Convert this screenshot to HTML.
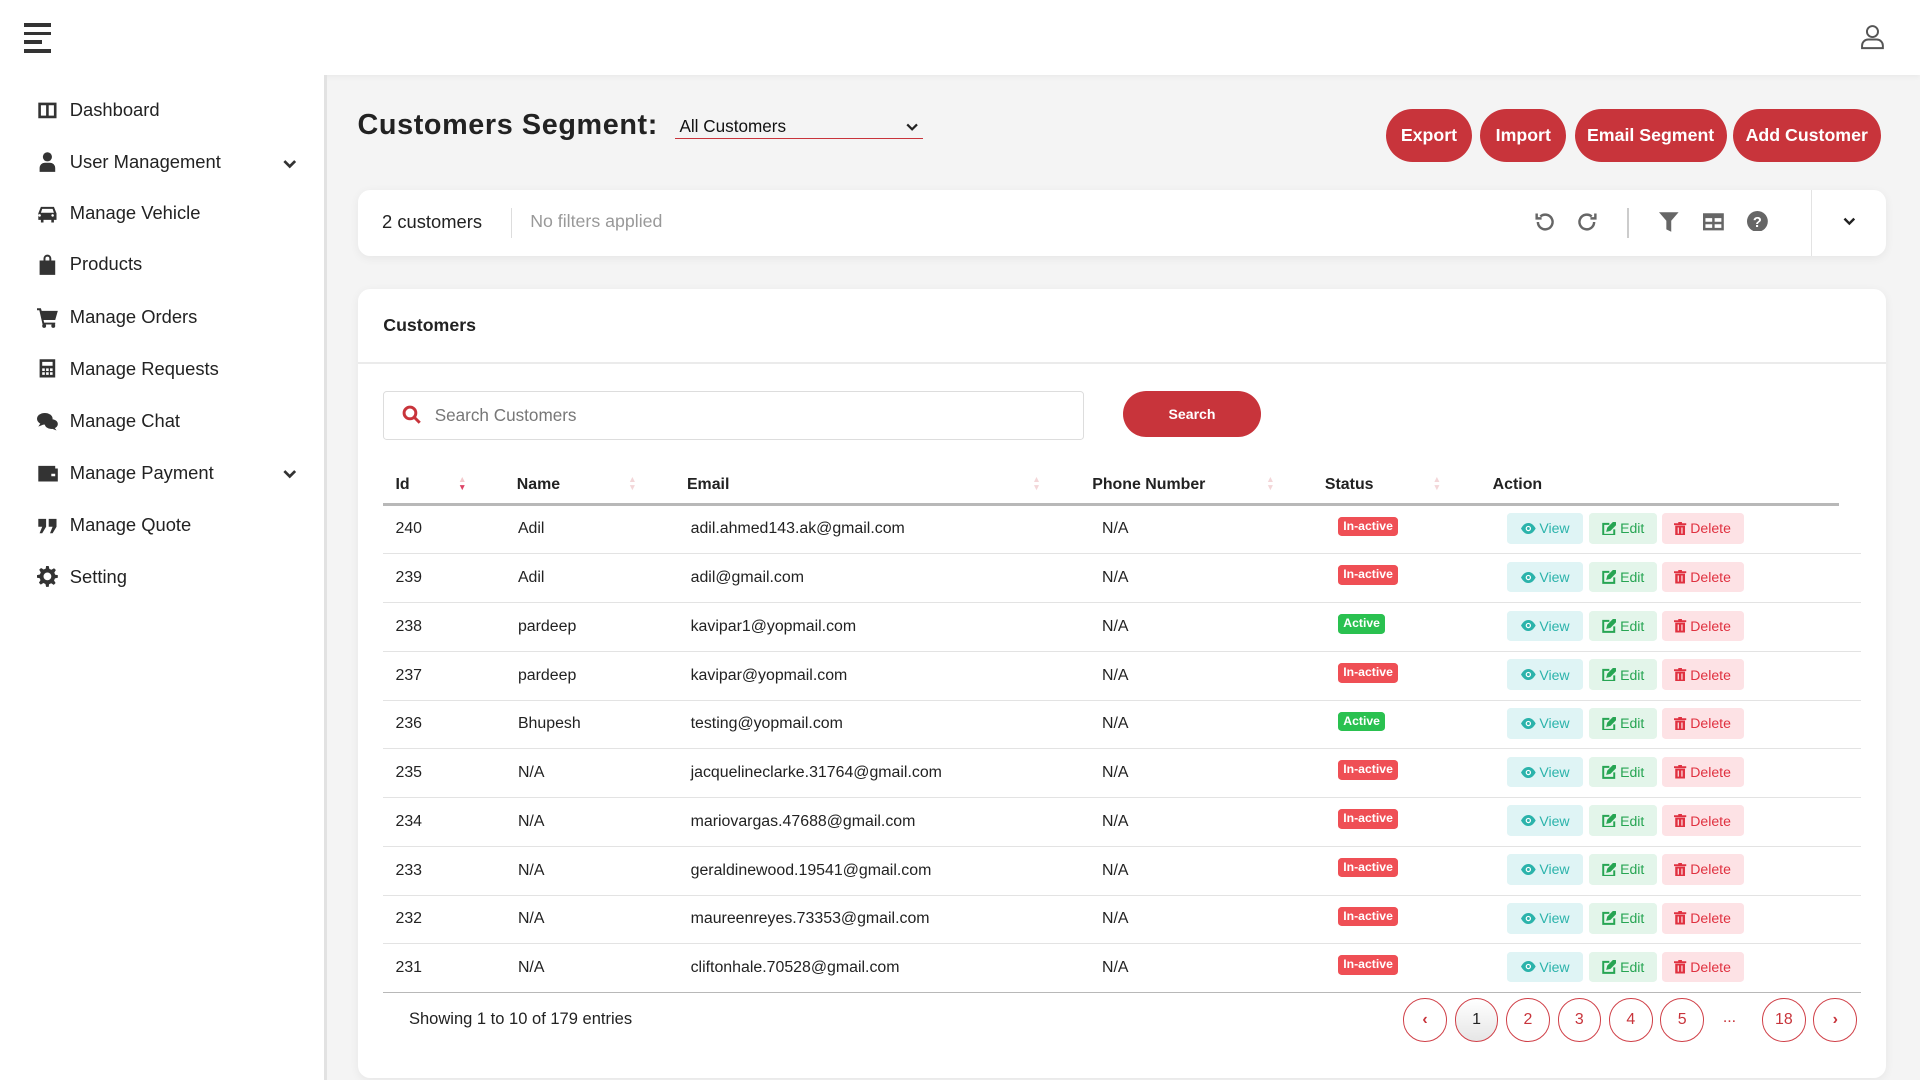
<!DOCTYPE html>
<html><head><meta charset="utf-8"><style>
html{zoom:1.22449}
body{margin:0;width:1568px;height:882px;overflow:hidden;background:#f4f4f4;font-family:"Liberation Sans",sans-serif;color:#222;position:relative}
.abs{position:absolute}
.hdr{left:0;top:0;width:1568px;height:61px;background:#fff;box-shadow:0 2px 4px rgba(0,0,0,.04)}
.side{left:0;top:61px;width:265px;height:821px;background:#fff;border-right:3px solid #e2e2e2}
.nav{position:absolute;left:30px;font-size:15px;color:#222;display:flex;align-items:center}
.nav svg{width:17px;height:17px;margin-right:10px;fill:#333}
.chev{position:absolute;left:231px;width:11px;height:11px}
.btn{position:absolute;top:89px;height:43px;background:#c8343b;color:#fff;border-radius:22px;font-size:14.5px;font-weight:bold;display:flex;align-items:center;justify-content:center}
.card{background:#fff;border-radius:10px;box-shadow:0 2px 8px rgba(0,0,0,.06)}
.th{position:absolute;top:389px;font-size:13px;font-weight:bold}
.row{position:absolute;left:313px;width:1207px;height:40px;border-bottom:1px solid #e3e3e3;font-size:13px}
.row span{position:absolute;top:13px}
.b{position:absolute;top:7px;height:25px;border-radius:3px;font-size:11.5px;display:flex;align-items:center;justify-content:center;gap:3px}
.v{left:918px;width:62px;background:#dff4f5;color:#2bb3ab}
.e{left:985px;width:55px;background:#e3f5ea;color:#27a553}
.d{left:1044px;width:67px;background:#fde2e5;color:#e03140}
.st{position:absolute;left:780px;height:16px;border-radius:3px;color:#fff;font-size:10px;font-weight:bold;padding:0 4px;line-height:16px}
.pg{position:absolute;top:815px;width:34px;height:34px;border:1px solid #d04048;border-radius:50%;color:#c8343b;font-size:13px;display:flex;align-items:center;justify-content:center}
</style></head><body>
<div class="abs hdr">
<div class="abs" style="left:20px;top:19px"><div style="width:22px;height:3px;background:#333;margin-bottom:4px"></div><div style="width:22px;height:3px;background:#333;margin-bottom:4px"></div><div style="width:14px;height:3px;background:#333;margin-bottom:4px"></div><div style="width:22px;height:3px;background:#333"></div></div>
<svg class="abs" style="left:1518px;top:19px" width="22" height="22" viewBox="0 0 22 22" fill="none" stroke="#555" stroke-width="1.6"><circle cx="11" cy="7" r="4.5"/><path d="M2.5 20.5v-2a5 5 0 0 1 5-5h7a5 5 0 0 1 5 5v2z"/></svg>
</div>
<div class="abs side">
<div class="nav" style="top:20px"><svg viewBox="0 0 16 16"><path d="M1 2h14v12H1zM3 4v8h4V4zm6 0v8h4V4z" fill-rule="evenodd"/></svg>Dashboard</div>
<div class="nav" style="top:62px"><svg viewBox="0 0 16 16"><circle cx="8" cy="4.5" r="3.5"/><path d="M2 16v-3a4 4 0 0 1 4-4h4a4 4 0 0 1 4 4v3z"/></svg>User Management</div>
<svg class="chev" style="top:67px" viewBox="0 0 10 10" fill="none" stroke="#333" stroke-width="2"><path d="M1 3l4 4 4-4"/></svg>
<div class="nav" style="top:104px"><svg viewBox="0 0 16 16"><path d="M3 3h10l2 5v5h-2v2h-2v-2H5v2H3v-2H1V8zm1 1.5L3 7.5h10l-1-3zM3 9.5a1 1 0 1 0 0 .1zm10 0a1 1 0 1 0 0 .1z"/></svg>Manage Vehicle</div>
<div class="nav" style="top:146px"><svg viewBox="0 0 16 16"><path d="M5 5V3.5a3 3 0 0 1 6 0V5h3v11H2V5zm1.5 0h3V3.5a1.5 1.5 0 0 0-3 0z"/></svg>Products</div>
<div class="nav" style="top:189px"><svg viewBox="0 0 16 16"><path d="M0 1h3l.6 2H16l-2 7H5l.5 2H14v1.5H4.3L1.8 2.5H0z"/><circle cx="5.5" cy="14.5" r="1.5"/><circle cx="12.5" cy="14.5" r="1.5"/></svg>Manage Orders</div>
<div class="nav" style="top:231px"><svg viewBox="0 0 16 16"><path d="M2 1h12v14H2zm2 2v3h8V3zm0 5v2h2V8zm3 0v2h2V8zm3 0v2h2V8zm-6 3v2h2v-2zm3 0v2h2v-2zm3 0v2h2v-2z" fill-rule="evenodd"/></svg>Manage Requests</div>
<div class="nav" style="top:274px"><svg viewBox="0 0 16 16"><ellipse cx="6" cy="6" rx="6" ry="4.5"/><path d="M1 12l2-3 3 1z"/><ellipse cx="11" cy="10" rx="5" ry="3.8"/><path d="M15 15l-2-3-3 1z"/></svg>Manage Chat</div>
<div class="nav" style="top:316px"><svg viewBox="0 0 16 16"><path d="M1 3h13v2H1zM1 5h15v10H1zm10 4v2h3V9z" fill-rule="evenodd"/></svg>Manage Payment</div>
<svg class="chev" style="top:320px" viewBox="0 0 10 10" fill="none" stroke="#333" stroke-width="2"><path d="M1 3l4 4 4-4"/></svg>
<div class="nav" style="top:359px"><svg viewBox="0 0 16 16"><path d="M1 3h6v6l-3 5H2l2-5H1zm8 0h6v6l-3 5h-2l2-5H9z"/></svg>Manage Quote</div>
<div class="nav" style="top:401px"><svg viewBox="0 0 16 16"><path d="M7 0h2l.5 2.2 1.6.7 2-1.2 1.4 1.4-1.2 2 .7 1.6L16 7v2l-2.2.5-.7 1.6 1.2 2-1.4 1.4-2-1.2-1.6.7L9 16H7l-.5-2.2-1.6-.7-2 1.2-1.4-1.4 1.2-2-.7-1.6L0 9V7l2.2-.5.7-1.6-1.2-2 1.4-1.4 2 1.2 1.6-.7zm1 5a3 3 0 1 0 0 6 3 3 0 0 0 0-6z" fill-rule="evenodd"/></svg>Setting</div>
</div>

<div class="abs" style="left:292px;top:89px;font-size:23.5px;font-weight:bold;color:#222;letter-spacing:0.5px">Customers Segment:</div>
<div class="abs" style="left:551px;top:95px;width:203px;height:18px;border-bottom:1.5px solid #c8343b;font-size:14px;color:#111">&nbsp;All Customers<svg style="position:absolute;right:4px;top:5px" width="10" height="8" viewBox="0 0 10 8" fill="none" stroke="#222" stroke-width="1.8"><path d="M1 2l4 4 4-4"/></svg></div>
<div class="btn" style="left:1132px;width:70px">Export</div>
<div class="btn" style="left:1209px;width:70px">Import</div>
<div class="btn" style="left:1286px;width:124px">Email Segment</div>
<div class="btn" style="left:1415px;width:121px">Add Customer</div>

<div class="abs card" style="left:292px;top:155px;width:1248px;height:54px">
<div class="abs" style="left:20px;top:17px;font-size:15px;color:#222">2 customers</div>
<div class="abs" style="left:125px;top:15px;width:1px;height:24px;background:#ddd"></div>
<div class="abs" style="left:141px;top:17px;font-size:14.5px;color:#999">No filters applied</div>
<svg class="abs" style="left:960px;top:17px" width="18" height="18" viewBox="0 0 18 18" fill="none" stroke="#666" stroke-width="2"><path d="M4 9a6 6 0 1 0 2-4.5"/><path d="M3 2v4h4"/></svg>
<svg class="abs" style="left:996px;top:17px" width="18" height="18" viewBox="0 0 18 18" fill="none" stroke="#666" stroke-width="2"><path d="M14 9a6 6 0 1 1-2-4.5"/><path d="M15 2v4h-4"/></svg>
<div class="abs" style="left:1037px;top:15px;width:1px;height:24px;background:#ccc"></div>
<svg class="abs" style="left:1063px;top:17px" width="16" height="18" viewBox="0 0 16 18" fill="#666"><path d="M0 1h16l-6 7v9l-4-2V8z"/></svg>
<svg class="abs" style="left:1099px;top:18px" width="17" height="16" viewBox="0 0 17 16" fill="#666"><path d="M0 1h17v14H0zm2 4v3h5.5V5zm7.5 0v3H15V5zM2 10v3h5.5v-3zm7.5 0v3H15v-3z" fill-rule="evenodd"/></svg>
<svg class="abs" style="left:1135px;top:17px" width="17" height="17" viewBox="0 0 17 17"><circle cx="8.5" cy="8.5" r="8.5" fill="#666"/><text x="8.5" y="13" font-size="12" font-weight="bold" fill="#fff" text-anchor="middle" font-family="Liberation Sans">?</text></svg>
<div class="abs" style="left:1187px;top:0;width:1px;height:54px;background:#e3e3e3"></div>
<svg class="abs" style="left:1212px;top:21px" width="12" height="10" viewBox="0 0 12 10" fill="none" stroke="#222" stroke-width="2"><path d="M2 3l4 4 4-4"/></svg>
</div>

<div class="abs card" style="left:292px;top:236px;width:1248px;height:644px"></div>
<div class="abs" style="left:313px;top:257px;font-size:14.5px;font-weight:bold">Customers</div>
<div class="abs" style="left:292px;top:296px;width:1248px;height:1px;background:#ebebeb"></div>
<div class="abs" style="left:313px;top:319px;width:571px;height:39px;border:1px solid #ddd;border-radius:3px;background:#fff"></div>
<svg class="abs" style="left:328px;top:331px" width="16" height="16" viewBox="0 0 16 16" fill="none" stroke="#c8343b" stroke-width="2.4"><circle cx="6.5" cy="6.5" r="4.8"/><path d="M10 10l4.5 4.5"/></svg>
<div class="abs" style="left:355px;top:331px;font-size:14px;color:#777">Search Customers</div>
<div class="abs" style="left:917px;top:319px;width:113px;height:38px;border-radius:20px;background:#c8343b;color:#fff;font-size:11.5px;font-weight:bold;display:flex;align-items:center;justify-content:center">Search</div>

<div class="th" style="left:323px">Id</div><div class="th" style="left:422px">Name</div><div class="th" style="left:561px">Email</div><div class="th" style="left:892px">Phone Number</div><div class="th" style="left:1082px">Status</div><div class="th" style="left:1219px">Action</div>
<div class="abs" style="left:374px;top:389px;font-size:7px;line-height:6px;color:#f3c9cc">▲<br><span style="color:#d46">▼</span></div>
<div class="abs" style="left:513px;top:389px;font-size:7px;line-height:6px;color:#f3d6d8">▲<br>▼</div>
<div class="abs" style="left:843px;top:389px;font-size:7px;line-height:6px;color:#f3d6d8">▲<br>▼</div>
<div class="abs" style="left:1034px;top:389px;font-size:7px;line-height:6px;color:#f3d6d8">▲<br>▼</div>
<div class="abs" style="left:1170px;top:389px;font-size:7px;line-height:6px;color:#f3d6d8">▲<br>▼</div>
<div class="abs" style="left:313px;top:411px;width:1189px;height:2px;background:#b8b8b8"></div>

<div id="rows"></div>
<script>
var d=[[240,"Adil","adil.ahmed143.ak@gmail.com",0],[239,"Adil","adil@gmail.com",0],[238,"pardeep","kavipar1@yopmail.com",1],[237,"pardeep","kavipar@yopmail.com",0],[236,"Bhupesh","testing@yopmail.com",1],[235,"N/A","jacquelineclarke.31764@gmail.com",0],[234,"N/A","mariovargas.47688@gmail.com",0],[233,"N/A","geraldinewood.19541@gmail.com",0],[232,"N/A","maureenreyes.73353@gmail.com",0],[231,"N/A","cliftonhale.70528@gmail.com",0]];
var h="",eye='<svg width="12" height="9" viewBox="0 0 12 9"><path d="M0 4.5C2 1 4 0 6 0s4 1 6 4.5C10 8 8 9 6 9S2 8 0 4.5z" fill="#2bb3ab"/><circle cx="6" cy="4.5" r="2.2" fill="#fff"/><circle cx="6" cy="4.5" r="1.2" fill="#2bb3ab"/></svg>',
ed='<svg width="12" height="11" viewBox="0 0 12 11" fill="none" stroke="#27a553" stroke-width="1.6"><path d="M6 1.5H1v9h9V6"/><path d="M4.5 7l.5-2 5-5 1.5 1.5-5 5z" fill="#27a553"/></svg>',
tr='<svg width="10" height="11" viewBox="0 0 10 11" fill="#e03140"><path d="M0 1h3.5V0h3v1H10v1.5H0zM1 3h8v8H1zm2 1.5v5h1v-5zm3 0v5h1v-5z" fill-rule="evenodd"/></svg>';
d.forEach(function(r,i){var t=412+i*39.8;h+='<div class="row" style="top:'+t+'px"><span style="left:10px">'+r[0]+'</span><span style="left:110px">'+r[1]+'</span><span style="left:251px">'+r[2]+'</span><span style="left:587px">N/A</span>'+(r[3]?'<div class="st" style="top:10px;background:#2ac150">Active</div>':'<div class="st" style="top:10px;background:#ef4f55">In-active</div>')+'<div class="b v">'+eye+' View</div><div class="b e">'+ed+' Edit</div><div class="b d">'+tr+' Delete</div></div>'});
document.getElementById("rows").innerHTML=h;
</script>
<div class="abs" style="left:313px;top:810px;width:1207px;height:1px;background:#b8b8b8"></div>
<div class="abs" style="left:334px;top:824px;font-size:13.5px">Showing 1 to 10 of 179 entries</div>
<div class="pg" style="left:1146px;font-weight:bold">‹</div>
<div class="pg" style="left:1188px;background:linear-gradient(#fff,#e6e6e6);color:#222">1</div>
<div class="pg" style="left:1230px">2</div><div class="pg" style="left:1272px">3</div><div class="pg" style="left:1314px">4</div><div class="pg" style="left:1356px">5</div>
<div class="abs" style="left:1407px;top:824px;font-size:13px;color:#c8343b">...</div>
<div class="pg" style="left:1439px">18</div>
<div class="pg" style="left:1481px;font-weight:bold">›</div>
</body></html>
